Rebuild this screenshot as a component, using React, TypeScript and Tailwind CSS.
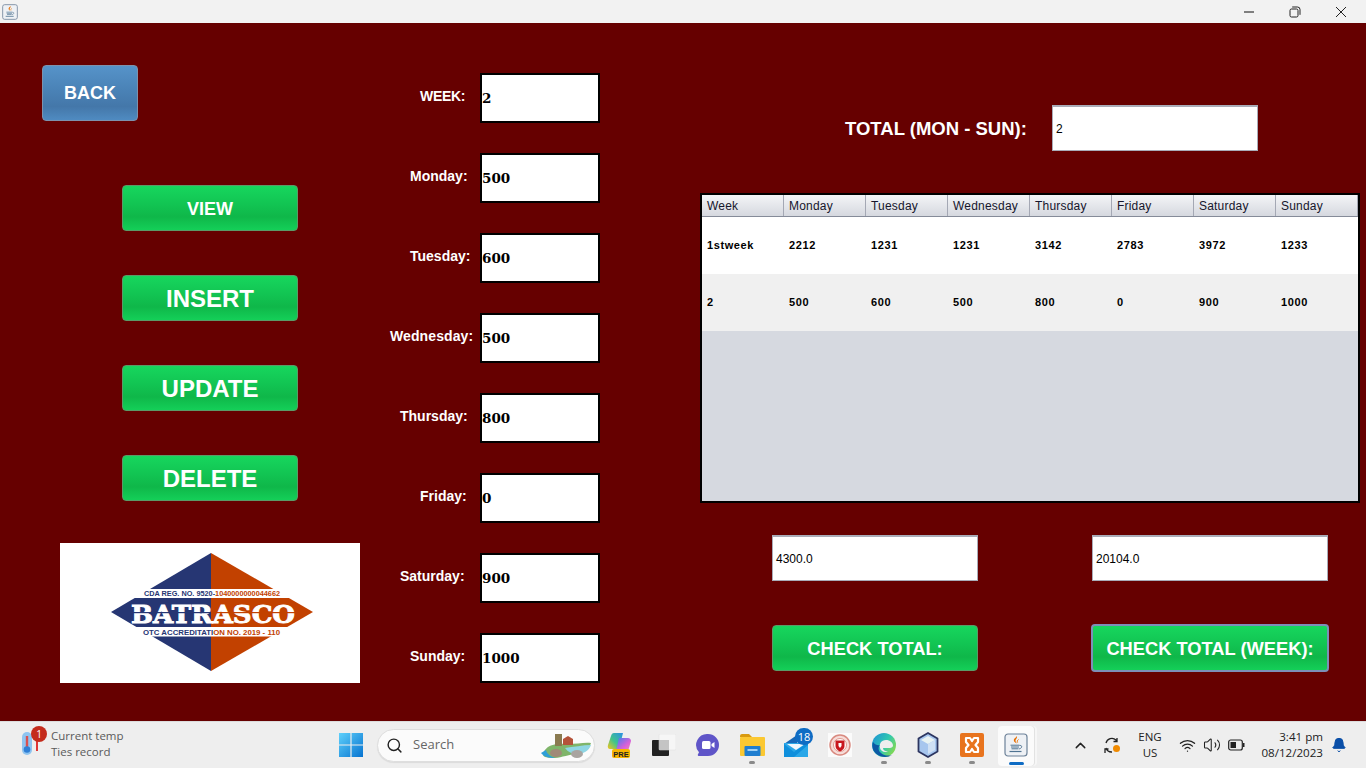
import React from "react";
import { Search, ChevronUp, Wifi, Volume2, Bell } from "lucide-react";

const sans = "font-['Liberation_Sans',Arial,sans-serif]";
const green = "bg-[linear-gradient(#17d65d_0%,#12c553_40%,#0fb749_70%,#14cf58_100%)]";

function GreenBtn({ className, children }: { className: string; children: React.ReactNode }) {
  return (
    <div className={`${green} ${sans} flex items-center justify-center rounded-[4px] border border-[#5b9a68] pt-[2px] font-bold text-white ${className}`}>
      {children}
    </div>
  );
}

function JavaIcon({ size }: { size: number }) {
  return (
    <svg width={size} height={size} viewBox="0 0 24 24">
      <rect x="1" y="1" width="22" height="22" rx="3" fill="#eef1f5" stroke="#6d8299" strokeWidth="1.2" />
      <path d="M12.5 3c1.700 2.200-1.800 3.200-.8 5.600.3.700.9 1.300 1.300 1.800-2.800-1-3.800-2.800-2.800-4.400.7-.9 2-1.600 2.300-3z" fill="#e76f00" />
      <path d="M14.5 6.500c-1 .8-1.600 1.500-.9 3" stroke="#e76f00" strokeWidth="1" fill="none" />
      <path d="M6.500 12.200h9M7 14h8M7.500 15.800h7" stroke="#4f7391" strokeWidth="1" />
      <path d="M15.500 12.500c3-.6 3.200 2.600-.5 3.500" stroke="#4f7391" strokeWidth="0.9" fill="none" />
      <path d="M5.500 18.500h12" stroke="#4f7391" strokeWidth="1.2" />
    </svg>
  );
}

function Logo() {
  return (
    <svg width="300" height="140" viewBox="0 0 300 140" className="bg-white">
      <polygon points="151,10 51,69 151,128" fill="#263673" />
      <polygon points="151,10 253,69 151,128" fill="#c24100" />
      <rect x="70" y="46" width="162" height="9" fill="#ffffff" />
      <rect x="70" y="84" width="162" height="9.500" fill="#ffffff" />
      <text x="84" y="53" textLength="136" lengthAdjust="spacingAndGlyphs" fontFamily="Liberation Sans, sans-serif" fontWeight="700" fontSize="8" fill="#263673">
        CDA REG. NO. 9520-<tspan fill="#c24100">1040000000044662</tspan>
      </text>
      <text x="83" y="91.800" textLength="137" lengthAdjust="spacingAndGlyphs" fontFamily="Liberation Sans, sans-serif" fontWeight="700" fontSize="8" fill="#263673">
        OTC ACCREDITATI<tspan fill="#c24100">ON NO. 2019 - 110</tspan>
      </text>
      <text x="71" y="79.500" textLength="164" lengthAdjust="spacingAndGlyphs" fontFamily="DejaVu Serif, serif" fontWeight="700" fontSize="25" fill="#ffffff" stroke="#ffffff" strokeWidth="0.9">
        BATRASCO
      </text>
      <rect x="71" y="69" width="80" height="1.200" fill="#263673" />
      <rect x="151" y="69" width="84" height="1.200" fill="#c24100" />
    </svg>
  );
}

const fields: { label: string; value: string; pad: string }[] = [
  { label: "WEEK:", value: "2", pad: "pl-[60px] tracking-[-0.3px]" },
  { label: "Monday:", value: "500", pad: "pl-[50px]" },
  { label: "Tuesday:", value: "600", pad: "pl-[50px]" },
  { label: "Wednesday:", value: "500", pad: "pl-[30px] tracking-[0.1px]" },
  { label: "Thursday:", value: "800", pad: "pl-[40px]" },
  { label: "Friday:", value: "0", pad: "pl-[60px]" },
  { label: "Saturday:", value: "900", pad: "pl-[40px]" },
  { label: "Sunday:", value: "1000", pad: "pl-[50px]" },
];

const headers = ["Week", "Monday", "Tuesday", "Wednesday", "Thursday", "Friday", "Saturday", "Sunday"];
const rows = [
  ["1stweek", "2212", "1231", "1231", "3142", "2783", "3972", "1233"],
  ["2", "500", "600", "500", "800", "0", "900", "1000"],
];

function Slot({ children, dot, className = "" }: { children: React.ReactNode; dot?: boolean; className?: string }) {
  return (
    <div className={`relative flex h-[47px] w-[44px] shrink-0 items-center justify-center ${className}`}>
      {children}
      {dot && <div className="absolute bottom-[5px] left-[19px] h-[3px] w-[6px] rounded-full bg-[#8a8a8a]" />}
    </div>
  );
}

export default function App() {
  return (
    <div className={`flex h-[768px] w-[1366px] flex-col overflow-hidden bg-[#660000] ${sans}`}>
      {/* title bar */}
      <div className="flex h-[23px] items-center bg-[#f2f2f2]">
        <div className="ml-[2px]"><JavaIcon size={16} /></div>
        <div className="ml-auto flex items-center text-[#222]">
          <div className="flex w-[46px] justify-center">
            <svg width="12" height="12" viewBox="0 0 12 12"><path d="M1 6h10" stroke="#222" strokeWidth="1.100" /></svg>
          </div>
          <div className="flex w-[46px] justify-center">
            <svg width="12" height="12" viewBox="0 0 12 12" fill="none" stroke="#222" strokeWidth="1">
              <rect x="1" y="3" width="8" height="8" rx="1.500" />
              <path d="M3.200 1h5.300A2.500 2.500 0 0 1 11 3.500v5.300" />
            </svg>
          </div>
          <div className="mr-[2px] flex w-[46px] justify-center">
            <svg width="12" height="12" viewBox="0 0 12 12"><path d="M1 1l10 10M11 1L1 11" stroke="#222" strokeWidth="1" /></svg>
          </div>
        </div>
      </div>

      {/* main */}
      <div className="flex h-[698px]">
        <div className="flex w-[360px] shrink-0 flex-col">
          <div className="ml-[42px] mt-[42px] flex h-[56px] w-[96px] items-center justify-center rounded-[4px] border border-[#7d92ad] bg-[linear-gradient(#5693c9_0%,#4a82b6_45%,#4477a9_75%,#4f8bc1_100%)] text-[18px] font-bold text-white">
            BACK
          </div>
          <div className="ml-[122px] mt-[64px] flex w-[176px] flex-col gap-[44px]">
            <GreenBtn className="h-[46px] text-[18px]">VIEW</GreenBtn>
            <GreenBtn className="h-[46px] text-[24px]">INSERT</GreenBtn>
            <GreenBtn className="h-[46px] text-[24px]">UPDATE</GreenBtn>
            <GreenBtn className="h-[46px] text-[24px]">DELETE</GreenBtn>
          </div>
          <div className="ml-[60px] mt-[42px] h-[140px] w-[300px]"><Logo /></div>
        </div>

        <div className="flex w-[240px] shrink-0 flex-col gap-[30px] pt-[50px]">
          {fields.map((f) => (
            <div key={f.label} className="flex h-[50px] items-center">
              <div className={`w-[120px] shrink-0 pb-[4px] text-[14px] font-bold text-white ${f.pad}`}>{f.label}</div>
              <div className="flex h-[50px] w-[120px] items-center border-2 border-black bg-white font-['DejaVu_Serif',serif] text-[13.5px] font-bold text-black">
                {f.value}
              </div>
            </div>
          ))}
        </div>

        <div className="flex flex-col">
          <div className="mt-[82px] flex items-center pl-[245px]">
            <div className="w-[207px] pt-[1px] text-[18.5px] font-bold text-white">TOTAL (MON - SUN):</div>
            <div className="flex h-[46px] w-[206px] items-center border border-t-2 border-[#a9acb8] bg-white pl-[3px] text-[12px] text-black">2</div>
          </div>

          <div className="ml-[100px] mt-[42px] flex h-[310px] w-[660px] flex-col border-2 border-black bg-[#d6d9e0]">
            <div className="grid h-[22px] grid-cols-[repeat(8,82px)] border-b border-[#858b99] bg-[linear-gradient(#f4f5f7,#d5d8df)] text-[12px] tracking-[0.2px] text-[#16162c]">
              {headers.map((h) => (
                <div key={h} className="flex items-center border-r border-[#a4a8b4] pl-[5px]">{h}</div>
              ))}
            </div>
            {rows.map((r, i) => (
              <div key={r[0]} className={`grid h-[57px] grid-cols-[repeat(8,82px)] items-center text-[11px] font-bold tracking-[0.6px] text-black ${i === 0 ? "bg-white" : "bg-[#f0f0f0]"}`}>
                {r.map((c, j) => (
                  <div key={j} className="pl-[5px]">{c}</div>
                ))}
              </div>
            ))}
          </div>

          <div className="ml-[172px] mt-[32px] flex gap-[114px]">
            <div className="flex h-[46px] w-[206px] items-center border border-t-2 border-[#a9acb8] bg-white pl-[3px] text-[12px] text-black">4300.0</div>
            <div className="flex h-[46px] w-[236px] items-center border border-t-2 border-[#a9acb8] bg-white pl-[3px] text-[12px] text-black">20104.0</div>
          </div>

          <div className="ml-[172px] mt-[44px] flex gap-[113px]">
            <GreenBtn className="h-[46px] w-[206px] text-[18.3px]">CHECK TOTAL:</GreenBtn>
            <GreenBtn className="h-[48px] w-[238px] -translate-y-px border-2 border-[#7d8fb8] text-[18.3px]">CHECK TOTAL (WEEK):</GreenBtn>
          </div>
        </div>
      </div>

      {/* taskbar */}
      <div className="flex h-[47px] items-center border-t border-[#dcdcdc] bg-[#eeeeee] font-['Open_Sans','Noto_Sans',sans-serif]">
        <div className="flex w-[329px] shrink-0 items-center">
          <div className="relative ml-[21px] h-[30px] w-[30px]">
            <svg width="30" height="30" viewBox="0 0 30 30" className="absolute left-0 top-0">
              <rect x="1" y="2" width="10" height="23" rx="5" fill="#8fc4f0" />
              <rect x="4.800" y="6" width="2.400" height="12" fill="#d85050" />
              <circle cx="6" cy="19.500" r="3.300" fill="#2f7fd6" />
              <path d="M16 6v15" stroke="#d22" strokeWidth="1.800" />
            </svg>
            <div className="absolute left-[10px] top-[-4px] flex h-[16px] w-[16px] items-center justify-center rounded-full bg-[#c42b1c] text-[10px] leading-none text-white">1</div>
          </div>
          <div className="-mt-[2px] text-[11.5px] leading-[16px] text-[#5a5a5a]">
            <div>Current temp</div>
            <div>Ties record</div>
          </div>
        </div>

        <Slot>
          <svg width="24" height="24" viewBox="0 0 24 24">
            <defs>
              <linearGradient id="w" x1="0" y1="0" x2="1" y2="1">
                <stop offset="0" stopColor="#5fd0fb" />
                <stop offset="1" stopColor="#0673d0" />
              </linearGradient>
            </defs>
            <path d="M0 0h11.400v11.400H0zM12.600 0H24v11.400H12.600zM0 12.600h11.400V24H0zM12.600 12.600H24V24H12.600z" fill="url(#w)" />
          </svg>
        </Slot>

        <div className="relative ml-[4px] flex h-[33px] w-[218px] shrink-0 items-center rounded-full border border-[#dedede] bg-[#fbfbfb] pl-[8px] shadow-[0_1px_1px_rgba(0,0,0,0.08)]">
          <Search size={17} strokeWidth={2} className="text-[#222]" />
          <span className="ml-[10px] text-[13px] text-[#666]">Search</span>
          <svg width="54" height="26" viewBox="0 0 54 26" className="absolute right-[1px] top-[3px]">
            <path d="M4 20C8 12 16 10 28 11c10 0 18-2 24-1-2 6-6 10-16 11-12 2-20 6-30 3-2-1-2-2-2-4z" fill="#7fb56a" />
            <path d="M26 15c8-1 18-3 26-3-2 6-8 9-14 9-5 0-9-2-12-6z" fill="#8fd6e4" />
            <path d="M2 20c3 4 8 5 14 5-5-2-8-4-9-8z" fill="#2e9fd8" />
            <rect x="16" y="1" width="7" height="12" fill="#8a7a50" />
            <path d="M24 6l5-3 5 3v6H24z" fill="#b5533a" />
            <ellipse cx="17" cy="20" rx="6" ry="4" fill="#a08a78" />
            <ellipse cx="38" cy="21" rx="6" ry="4" fill="#a9a4a0" />
          </svg>
        </div>

        <Slot className="ml-[3px]">
          <svg width="26" height="28" viewBox="0 0 26 28">
            <defs>
              <linearGradient id="c1" x1="0" y1="1" x2="1" y2="0">
                <stop offset="0" stopColor="#f5c518" />
                <stop offset="0.45" stopColor="#3fc48c" />
                <stop offset="1" stopColor="#2a8fe6" />
              </linearGradient>
              <linearGradient id="c2" x1="0" y1="0" x2="1" y2="1">
                <stop offset="0" stopColor="#3a7ff0" />
                <stop offset="0.6" stopColor="#d860d8" />
                <stop offset="1" stopColor="#f08ab0" />
              </linearGradient>
            </defs>
            <path d="M7 2h9l-4 16H3c-2 0-2.600-2-2-4l3-9c.5-2 1.500-3 3-3z" fill="url(#c1)" />
            <path d="M12 7h9c2 0 3 1.500 3 3l-2 7c-.5 2-2 3-4 3H9z" fill="url(#c2)" />
            <rect x="5" y="18" width="18" height="9" rx="2" fill="#f7b500" />
            <text x="14" y="25.500" textAnchor="middle" fontSize="7.500" fontWeight="700" fontFamily="Liberation Sans, sans-serif" fill="#222">PRE</text>
          </svg>
        </Slot>
        <Slot>
          <svg width="24" height="22" viewBox="0 0 24 22">
            <rect x="0" y="6" width="17" height="16" rx="1" fill="#222" />
            <rect x="7" y="0" width="17" height="16" rx="1" fill="#f6f6f6" stroke="#dddddd" strokeWidth="0.5" />
            <rect x="7" y="6" width="10" height="10" fill="#c4c4c4" />
          </svg>
        </Slot>
        <Slot>
          <svg width="24" height="24" viewBox="0 0 24 24">
            <path d="M12 1a11 11 0 0 1 0 22H3c-1 0-1.500-1-1-1.700l1-2A11 11 0 0 1 12 1z" fill="#5f55c8" />
            <rect x="6" y="8" width="8.500" height="8" rx="1.500" fill="#ffffff" />
            <path d="M15.500 11l3-2v6l-3-2z" fill="#ffffff" />
          </svg>
        </Slot>
        <Slot dot>
          <svg width="25" height="22" viewBox="0 0 25 22">
            <path d="M0 2a2 2 0 0 1 2-2h7l3 3H0z" fill="#d99a10" />
            <rect x="0" y="3" width="25" height="19" rx="1" fill="#fbc832" />
            <rect x="4.500" y="12" width="16" height="10" rx="1" fill="#1f7ed0" />
            <rect x="7.500" y="15" width="10" height="2" fill="#9ed0f5" />
          </svg>
        </Slot>
        <Slot>
          <svg width="24" height="24" viewBox="0 0 24 24">
            <path d="M0 11L13 2v9z" fill="#1768b8" />
            <rect x="0" y="10" width="24" height="14" fill="#2aa7e8" />
            <path d="M0 11l10 8 14-10v3L10 24H0z" fill="#0f8fdc" />
            <path d="M3 11h18l-9 6z" fill="#f2f8fd" />
          </svg>
          <div className="absolute left-[21px] top-[6px] flex h-[17px] w-[18px] items-center justify-center rounded-full bg-[#0f6cc4] text-[11px] leading-none text-white">18</div>
        </Slot>
        <Slot>
          <svg width="24" height="24" viewBox="0 0 24 24">
            <rect width="24" height="24" fill="#fbfbfb" />
            <circle cx="12" cy="12" r="10" fill="#f6dcd8" stroke="#d98a80" strokeWidth="1.500" />
            <circle cx="12" cy="12" r="6.500" fill="#ffffff" stroke="#e09a90" strokeWidth="1" />
            <path d="M7.500 7.500h9V13c0 3-2.500 4.500-4.500 5.500-2-1-4.500-2.500-4.500-5.500z" fill="#c8161d" />
            <path d="M10.500 10h3v3l-1.500 2-1.500-2z" fill="#ffffff" />
          </svg>
        </Slot>
        <Slot dot>
          <svg width="24" height="24" viewBox="0 0 24 24">
            <defs>
              <linearGradient id="e1" x1="0" y1="0" x2="1" y2="0.600">
                <stop offset="0" stopColor="#1d8fd8" />
                <stop offset="0.6" stopColor="#30c8b0" />
                <stop offset="1" stopColor="#7ed857" />
              </linearGradient>
            </defs>
            <circle cx="12" cy="12" r="12" fill="url(#e1)" />
            <path d="M1 9c-3 9 5 15 12 15 3 0 5-.8 7-2-3 1-8 1-11-2-3-2.500-3-6-1-8-2 .5-5 0-7-3z" fill="#0c59a4" />
            <path d="M8 15c-1-4 1-8 6-8 4 0 7 2.500 7 5.500 0 2-2 2.500-5 2.500h-5c0 2 2 3.500 5 3.500-4 1.500-7.500-.5-8-3.500z" fill="#eeeeee" />
          </svg>
        </Slot>
        <Slot dot>
          <svg width="22" height="26" viewBox="0 0 22 26">
            <path d="M11 1l9.500 5.500v13L11 25l-9.500-5.500v-13z" fill="#a7c6ee" stroke="#2c3560" strokeWidth="1.800" strokeLinejoin="round" />
            <path d="M11 4l7 4-7 4-7-4z" fill="#e8f2f2" />
            <path d="M11 12v10l7-4V8z" fill="#cfe0f4" />
          </svg>
        </Slot>
        <Slot dot>
          <svg width="24" height="24" viewBox="0 0 24 24">
            <rect width="24" height="24" rx="2" fill="#e8741e" />
            <path d="M6 5h4l2 3 2-3h4v4l-2.500 3L18 15v4h-4l-2-3-2 3H6v-4l2.500-3L6 9z" fill="none" stroke="#ffffff" strokeWidth="2.200" strokeLinejoin="round" />
          </svg>
        </Slot>
        <Slot>
          <div className="absolute left-[4px] top-[4px] h-[40px] w-[36px] rounded-[4px] bg-[#fbfbfb] shadow-[1px_0_0_#e2e2e2,3px_0_0_#f6f6f6]" />
          <div className="relative"><JavaIcon size={24} /></div>
          <div className="absolute bottom-[4px] left-[15px] h-[3px] w-[15px] rounded-full bg-[#0f6cc4]" />
        </Slot>

        <div className="relative ml-[34px] flex h-[47px] flex-1 items-center text-[#333]">
          <ChevronUp size={17} strokeWidth={2} className="text-[#222]" />
          <svg width="18" height="20" viewBox="0 0 18 20" className="ml-[14px]" fill="none" stroke="#222" strokeWidth="1.300">
            <path d="M3 8a6 6 0 0 1 10-3l1 1M14 3v3.500h-3.500" />
            <path d="M9 17a6 6 0 0 1-6-4M2 18v-4h3.500" />
            <circle cx="13.500" cy="13.500" r="3.500" fill="#f08a00" stroke="none" />
          </svg>
          <div className="ml-[17px] w-[24px] text-center text-[11.5px] leading-[16px] text-[#222]">
            <div>ENG</div>
            <div>US</div>
          </div>
          <Wifi size={17} strokeWidth={1.8} className="ml-[17px] text-[#222]" />
          <Volume2 size={18} strokeWidth={1.4} className="ml-[7px] text-[#222]" />
          <svg width="17" height="12" viewBox="0 0 17 12" className="ml-[7px]">
            <rect x="0.700" y="1" width="13.600" height="10" rx="2" fill="none" stroke="#222" strokeWidth="1.200" />
            <rect x="2.500" y="3" width="5.500" height="6" fill="#222" />
            <rect x="15" y="4" width="1.500" height="4" fill="#222" />
          </svg>
          <div className="ml-[8px] w-[70px] text-right text-[11.6px] leading-[16px] text-[#222]">
            <div>3:41 pm</div>
            <div>08/12/2023</div>
          </div>
          <Bell size={16} fill="#0a4fa8" strokeWidth={1.5} className="ml-[8px] text-[#0a4fa8]" />
        </div>
      </div>
    </div>
  );
}
